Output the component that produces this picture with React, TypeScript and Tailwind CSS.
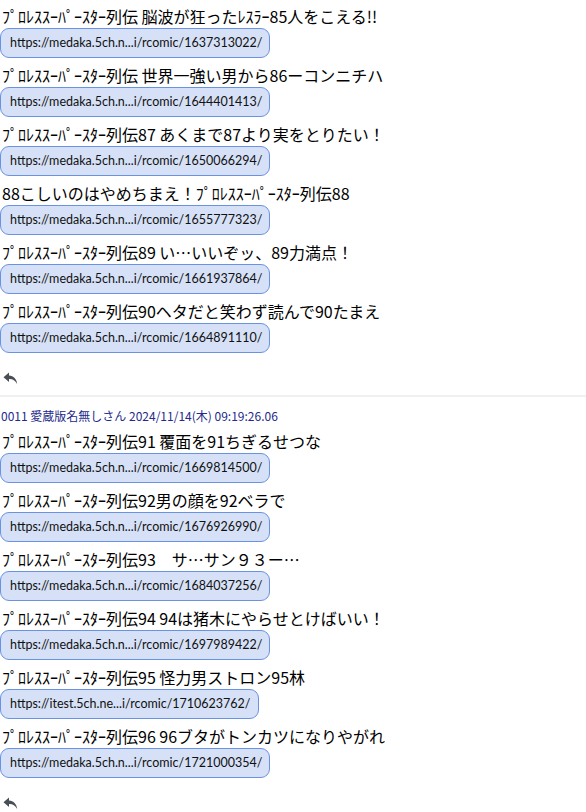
import React from 'react';

type Post = { title: string; url: string };

const REPLY_ICON = (
    <svg width="15" height="13" viewBox="0 0 15 13" className="text-[#4a4f57]">
        <path d="M6 0.5 L0.5 5.2 L6 10 V7 C9.6 6.8 12 8.2 14.2 12 C13.6 6.8 10.6 3.9 6 3.5 Z" fill="currentColor" />
    </svg>
);

const first: Post[] = [
    { title: 'ﾌﾟﾛﾚｽｽｰﾊﾟｰｽﾀｰ列伝 脳波が狂ったﾚｽﾗｰ85人をこえる!!', url: 'https://medaka.5ch.n...i/rcomic/1637313022/' },
    { title: 'ﾌﾟﾛﾚｽｽｰﾊﾟｰｽﾀｰ列伝 世界一強い男から86ーコンニチハ', url: 'https://medaka.5ch.n...i/rcomic/1644401413/' },
    { title: 'ﾌﾟﾛﾚｽｽｰﾊﾟｰｽﾀｰ列伝87 あくまで87より実をとりたい！', url: 'https://medaka.5ch.n...i/rcomic/1650066294/' },
    { title: '88こしいのはやめちまえ！ﾌﾟﾛﾚｽｽｰﾊﾟｰｽﾀｰ列伝88', url: 'https://medaka.5ch.n...i/rcomic/1655777323/' },
    { title: 'ﾌﾟﾛﾚｽｽｰﾊﾟｰｽﾀｰ列伝89 い…いいぞッ、89力満点！', url: 'https://medaka.5ch.n...i/rcomic/1661937864/' },
    { title: 'ﾌﾟﾛﾚｽｽｰﾊﾟｰｽﾀｰ列伝90ヘタだと笑わず読んで90たまえ', url: 'https://medaka.5ch.n...i/rcomic/1664891110/' },
];

const second: Post[] = [
    { title: 'ﾌﾟﾛﾚｽｽｰﾊﾟｰｽﾀｰ列伝91 覆面を91ちぎるせつな', url: 'https://medaka.5ch.n...i/rcomic/1669814500/' },
    { title: 'ﾌﾟﾛﾚｽｽｰﾊﾟｰｽﾀｰ列伝92男の顔を92ベラで', url: 'https://medaka.5ch.n...i/rcomic/1676926990/' },
    { title: 'ﾌﾟﾛﾚｽｽｰﾊﾟｰｽﾀｰ列伝93　サ…サン９３ー…', url: 'https://medaka.5ch.n...i/rcomic/1684037256/' },
    { title: 'ﾌﾟﾛﾚｽｽｰﾊﾟｰｽﾀｰ列伝94 94は猪木にやらせとけばいい！', url: 'https://medaka.5ch.n...i/rcomic/1697989422/' },
    { title: 'ﾌﾟﾛﾚｽｽｰﾊﾟｰｽﾀｰ列伝95 怪力男ストロン95林', url: 'https://itest.5ch.ne...i/rcomic/1710623762/' },
    { title: 'ﾌﾟﾛﾚｽｽｰﾊﾟｰｽﾀｰ列伝96 96ブタがトンカツになりやがれ', url: 'https://medaka.5ch.n...i/rcomic/1721000354/' },
];

const PostList: React.FC<{ posts: Post[] }> = ({ posts }) => (
    <div className="flex flex-col gap-[6px]">
        {posts.map((p) => (
            <div key={p.url} className="flex flex-col items-start">
                <p className="text-[16px] leading-[23px] text-black pl-[2px] whitespace-nowrap">{p.title}</p>
                <span className="h-[30px] flex items-center pl-[9px] pr-[7px] rounded-[9px] bg-[#d6e1f7] border-[1.5px] border-[#6a92e2] text-[12.5px] text-[#111] font-['Lato',sans-serif] whitespace-nowrap">
                    {p.url}
                </span>
            </div>
        ))}
    </div>
);

const App: React.FC = () => {
    return (
        <div className="w-[586px] h-[812px] overflow-hidden bg-white font-['Noto_Sans_CJK_JP',sans-serif]">
            <div className="pt-[5px]">
                <PostList posts={first} />
                <div className="pt-[19px] pl-[3px] h-[42px]">{REPLY_ICON}</div>
            </div>
            <div className="h-[2px] bg-[#f0f0f0]" />
            <div className="pt-[11px]">
                <p className="text-[12px] leading-[16px] text-[#242a8a] pl-[1px] mb-[6px]">0011 愛蔵版名無しさん 2024/11/14(木) 09:19:26.06</p>
                <PostList posts={second} />
                <div className="pt-[19px] pl-[3px]">{REPLY_ICON}</div>
            </div>
        </div>
    );
};

export default App;
